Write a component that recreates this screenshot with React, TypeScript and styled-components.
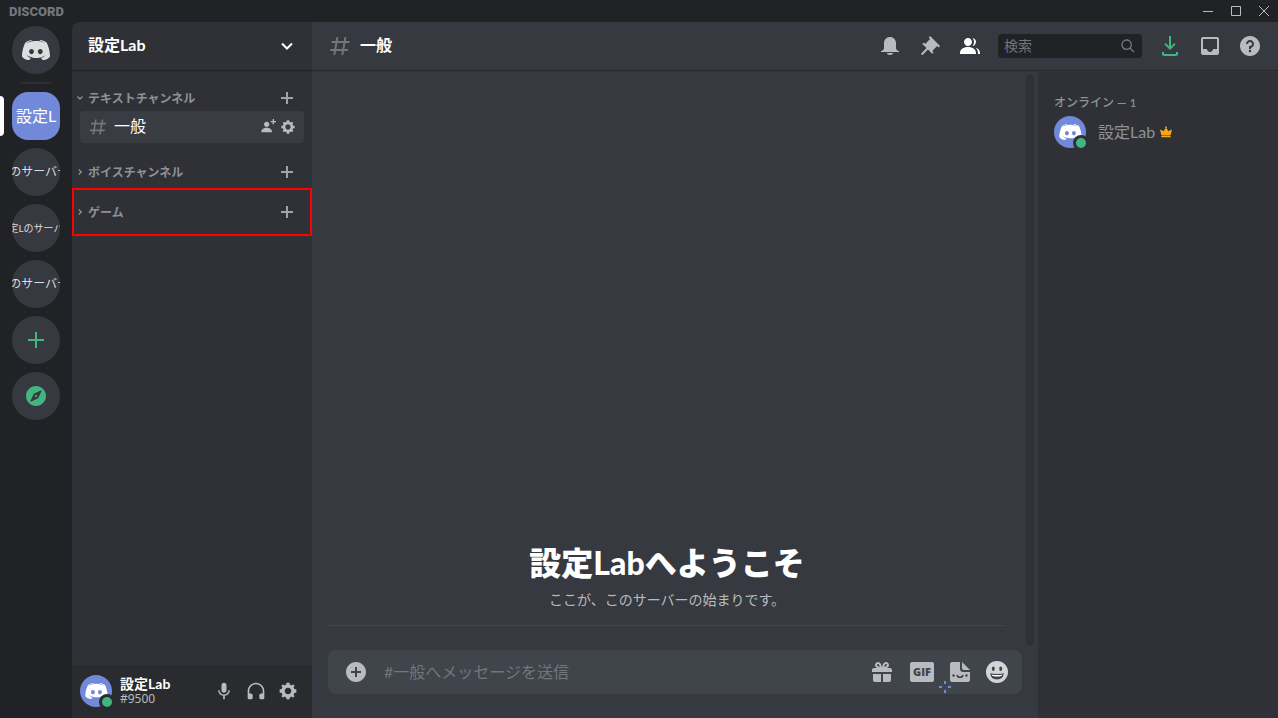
import React from 'react';
import styled, { createGlobalStyle } from 'styled-components';

const GlobalStyle = createGlobalStyle`
  *, *::before, *::after { box-sizing: border-box; }
  body {
    margin: 0;
    background: #202225;
    color: #dcddde;
    font-family: Lato, "Noto Sans CJK JP", sans-serif;
    font-size: 16px;
    line-height: 20px;
  }
  button {
    margin: 0;
    padding: 0;
    border: 0;
    background: none;
    color: inherit;
    font: inherit;
    cursor: pointer;
  }
  svg { display: block; flex: none; }
  h1, h2, h3, p, ul { margin: 0; padding: 0; font-size: inherit; }
  ul { list-style: none; }
  a { color: inherit; text-decoration: none; }
`;

const PATHS = {
  logo: 'M20.6644 20C20.6644 20 19.8014 18.9762 19.0822 18.0714C22.2226 17.1905 23.4212 15.2381 23.4212 15.2381C22.4384 15.881 21.5034 16.3334 20.6644 16.6429C19.4658 17.1429 18.3151 17.4762 17.1884 17.6667C14.887 18.0953 12.7774 17.9762 10.9795 17.6429C9.61301 17.381 8.43835 17 7.45548 16.6191C6.90411 16.4048 6.30479 16.1429 5.70548 15.8096C5.63356 15.7619 5.56164 15.7381 5.48973 15.6905C5.44178 15.6667 5.41781 15.6429 5.39384 15.6191C4.96233 15.381 4.7226 15.2143 4.7226 15.2143C4.7226 15.2143 5.87329 17.1191 8.91781 18.0238C8.19863 18.9286 7.31164 20 7.31164 20C2.0137 19.8333 0 16.381 0 16.381C0 8.7144 3.45205 2.5 3.45205 2.5C6.90411 -0.0713 10.1884 0 10.1884 0L10.4281 0.2858C6.11301 1.5239 4.12329 3.4049 4.12329 3.4049C4.12329 3.4049 4.65068 3.1192 5.53767 2.7144C8.10274 1.5954 10.1404 1.2859 10.9795 1.2144C11.1233 1.1906 11.2432 1.1668 11.387 1.1668C12.8493 0.9763 14.5034 0.9287 16.2295 1.1192C18.5068 1.3811 20.9521 2.0478 23.4452 3.4049C23.4452 3.4049 21.5514 1.6192 17.476 0.3811L17.8116 0C17.8116 0 21.0959 -0.0713 24.5479 2.5C24.5479 2.5 28 8.7144 28 16.381C28 16.381 25.9623 19.8333 20.6644 20ZM9.51712 8.8811C8.15068 8.8811 7.07192 10.0715 7.07192 11.5239C7.07192 12.9763 8.17466 14.1667 9.51712 14.1667C10.8836 14.1667 11.9623 12.9763 11.9623 11.5239C11.9863 10.0715 10.8836 8.8811 9.51712 8.8811ZM18.2671 8.8811C16.9007 8.8811 15.8219 10.0715 15.8219 11.5239C15.8219 12.9763 16.9247 14.1667 18.2671 14.1667C19.6336 14.1667 20.7123 12.9763 20.7123 11.5239C20.7123 10.0715 19.6336 8.8811 18.2671 8.8811Z',
  hash: 'M5.88657 21C5.57547 21 5.3399 20.7189 5.39427 20.4126L6 17H2.59511C2.28449 17 2.04905 16.7198 2.10259 16.4138L2.27759 15.4138C2.31946 15.1746 2.52722 15 2.77011 15H6.35L7.41 9H4.00511C3.69449 9 3.45905 8.71977 3.51259 8.41381L3.68759 7.41381C3.72946 7.17456 3.93722 7 4.18011 7H7.76L8.39677 3.41262C8.43914 3.17391 8.64664 3 8.88907 3H9.87344C10.1845 3 10.4201 3.28107 10.3657 3.58738L9.76 7H15.76L16.3968 3.41262C16.4391 3.17391 16.6466 3 16.8891 3H17.8734C18.1845 3 18.4201 3.28107 18.3657 3.58738L17.76 7H21.1649C21.4755 7 21.711 7.28023 21.6574 7.58619L21.4824 8.58619C21.4406 8.82544 21.2328 9 20.9899 9H17.41L16.35 15H19.7549C20.0655 15 20.301 15.2802 20.2474 15.5862L20.0724 16.5862C20.0306 16.8254 19.8228 17 19.5799 17H16L15.3632 20.5874C15.3209 20.8261 15.1134 21 14.8709 21H13.8866C13.5755 21 13.3399 20.7189 13.3943 20.4126L14 17H8L7.36325 20.5874C7.32088 20.8261 7.11337 21 6.87094 21H5.88657ZM9.41045 9L8.35045 15H14.3504L15.4104 9H9.41045Z',
  bell: 'M18 9V14C18 15.657 19.344 17 21 17V18H3V17C4.656 17 6 15.657 6 14V9C6 5.686 8.686 3 12 3C15.314 3 18 5.686 18 9ZM12 21C10.524 21 9.248 20.19 8.555 19H15.445C14.752 20.19 13.476 21 12 21Z',
  pin: 'M22 12L12.101 2.101L10.686 3.514L12.101 4.929L7.151 9.878V9.88L5.736 8.465L4.322 9.88L8.565 14.122L2.908 19.778L4.322 21.192L9.979 15.536L14.222 19.778L15.636 18.364L14.222 16.95L19.171 12H19.172L20.586 13.414L22 12Z',
  members: 'M14 8.006C14 10.211 12.206 12.006 10 12.006C7.795 12.006 6 10.211 6 8.006C6 5.801 7.794 4.006 10 4.006C12.206 4.006 14 5.801 14 8.006ZM2 19.006C2 15.473 5.29 13.006 10 13.006C14.711 13.006 18 15.473 18 19.006V20.006H2V19.006ZM20 20.006H22V19.006C22 16.443 20.27 14.442 17.521 13.535C19.062 14.913 20 16.806 20 19.006V20.006ZM14.883 11.908C16.666 11.504 18 9.908 18 8.006C18 5.969 16.469 4.282 14.497 4.037C15.432 5.095 16 6.485 16 8.006C16 9.449 15.489 10.774 14.638 11.81C14.72 11.842 14.802 11.874 14.883 11.908Z',
  inbox: 'M19 3H4.99C3.88 3 3.01 3.89 3.01 5L3 19C3 20.1 3.88 21 4.99 21H19C20.1 21 21 20.1 21 19V5C21 3.89 20.1 3 19 3ZM19 15H15C15 16.66 13.65 18 12 18C10.35 18 9 16.66 9 15H4.99V5H19V15Z',
  help: 'M12 2C6.486 2 2 6.487 2 12C2 17.515 6.486 22 12 22C17.514 22 22 17.515 22 12C22 6.487 17.514 2 12 2ZM12 18.25C11.31 18.25 10.75 17.691 10.75 17C10.75 16.31 11.31 15.75 12 15.75C12.69 15.75 13.25 16.31 13.25 17C13.25 17.691 12.69 18.25 12 18.25ZM13 13.875V15H11V12H12C13.104 12 14 11.103 14 10C14 8.896 13.104 8 12 8C10.896 8 10 8.896 10 10H8C8 7.795 9.795 6 12 6C14.205 6 16 7.795 16 10C16 11.861 14.723 13.429 13 13.875Z',
  search: 'M21.707 20.293L16.314 14.9C17.403 13.504 18 11.799 18 10C18 7.863 17.167 5.854 15.656 4.344C14.146 2.832 12.137 2 10 2C7.863 2 5.854 2.832 4.344 4.344C2.833 5.854 2 7.863 2 10C2 12.137 2.833 14.146 4.344 15.656C5.854 17.168 7.863 18 10 18C11.799 18 13.504 17.404 14.9 16.314L20.293 21.706L21.707 20.293ZM10 16C8.397 16 6.891 15.376 5.758 14.243C4.624 13.11 4 11.603 4 10C4 8.398 4.624 6.891 5.758 5.758C6.891 4.624 8.397 4 10 4C11.603 4 13.109 4.624 14.242 5.758C15.376 6.891 16 8.398 16 10C16 11.603 15.376 13.11 14.242 14.243C13.109 15.376 11.603 16 10 16Z',
  gear: 'M19.738 10H22V14H19.739C19.498 14.931 19.1 15.798 18.565 16.564L20 18L18 20L16.565 18.564C15.797 19.099 14.932 19.498 14 19.738V22H10V19.738C9.069 19.498 8.203 19.099 7.436 18.564L6 20L4 18L5.436 16.564C4.901 15.799 4.502 14.932 4.262 14H2V10H4.262C4.502 9.068 4.9 8.202 5.436 7.436L4 6L6 4L7.436 5.436C8.202 4.9 9.068 4.502 10 4.262V2H14V4.261C14.932 4.502 15.797 4.9 16.565 5.435L18 4L20 6L18.564 7.436C19.099 8.202 19.498 9.069 19.738 10ZM12 16C14.209 16 16 14.209 16 12C16 9.791 14.209 8 12 8C9.791 8 8 9.791 8 12C8 14.209 9.791 16 12 16Z',
  mic: 'M14.99 11C14.99 12.66 13.66 14 12 14C10.34 14 9 12.66 9 11V5C9 3.34 10.34 2 12 2C13.66 2 15 3.34 15 5L14.99 11ZM12 16.1C14.76 16.1 17.3 14 17.3 11H19C19 14.42 16.28 17.24 13 17.72V22H11V17.72C7.72 17.23 5 14.41 5 11H6.7C6.7 14 9.24 16.1 12 16.1Z',
  headphones: 'M12 2C6.486 2 2 6.488 2 12V20C2 21.107 2.895 22 4 22H6C7.104 22 8 21.107 8 20V17C8 15.899 7.104 15 6 15H4V12C4 7.591 7.589 4 12 4C16.411 4 20 7.591 20 12V15H18C16.896 15 16 15.899 16 17V20C16 21.107 16.896 22 18 22H20C21.104 22 22 21.107 22 20V12C22 6.488 17.514 2 12 2Z',
  invite: 'M21 3H24V5H21V8H19V5H16V3H19V0H21V3ZM10 12C12.205 12 14 10.205 14 8C14 5.795 12.205 4 10 4C7.795 4 6 5.795 6 8C6 10.205 7.795 12 10 12ZM10 13C5.289 13 2 15.467 2 19V20H18V19C18 15.467 14.711 13 10 13Z',
  attach: 'M12 2C6.486 2 2 6.487 2 12C2 17.515 6.486 22 12 22C17.514 22 22 17.515 22 12C22 6.487 17.514 2 12 2ZM17 13H13V17H11V13H7V11H11V7H13V11H17V13Z',
  compass: 'M12 10.9c-.61 0-1.1.49-1.1 1.1s.49 1.1 1.1 1.1c.61 0 1.1-.49 1.1-1.1s-.49-1.1-1.1-1.1zM12 2C6.48 2 2 6.48 2 12s4.48 10 10 10 10-4.48 10-10S17.52 2 12 2zm2.19 12.19L6 18l3.81-8.19L18 6l-3.81 8.19z',
  plus: 'M11 4H13V11H20V13H13V20H11V13H4V11H11Z',
  plusBold: 'M10.667 4H13.333V10.667H20V13.333H13.333V20H10.667V13.333H4V10.667H10.667Z',
  download: 'M11 2H13V12.2L16.3 8.9L17.7 10.3L12 16L6.3 10.3L7.7 8.9L11 12.2ZM4 18H6V20H18V18H20V20C20 21.1 19.1 22 18 22H6C4.9 22 4 21.1 4 20Z',
  gift: 'M16.886 8H20C21.104 8 22 8.896 22 10V12H2V10C2 8.896 2.897 8 4 8H7.114C6.663 7.764 6.236 7.477 5.879 7.121C4.709 5.951 4.709 4.048 5.879 2.879C7.012 1.746 8.986 1.745 10.121 2.877C11.758 4.514 11.979 7.595 11.998 7.941L12 8L12.002 7.941C12.022 7.595 12.242 4.514 13.879 2.877C15.014 1.745 16.986 1.746 18.121 2.877C19.29 4.048 19.29 5.951 18.121 7.121C17.764 7.477 17.337 7.764 16.886 8ZM7.293 5.707C6.903 5.316 6.903 4.682 7.293 4.292C7.481 4.103 7.732 4 8 4C8.268 4 8.519 4.103 8.707 4.292C9.297 4.882 9.641 5.94 9.825 6.822C8.945 6.639 7.879 6.293 7.293 5.707ZM14.174 6.824C14.359 5.941 14.702 4.883 15.293 4.293C15.481 4.103 15.732 4 16 4C16.268 4 16.519 4.103 16.706 4.291C17.096 4.682 17.097 5.316 16.707 5.707C16.116 6.298 15.057 6.642 14.174 6.824ZM3 14H11V22H5C3.896 22 3 21.102 3 20V14ZM13 14H21V20C21 21.102 20.104 22 19 22H13V14Z',
};

type IconName = keyof typeof PATHS;

const Icon = ({ name, size = 24 }: { name: IconName; size?: number }) => (
  <svg width={size} height={size} viewBox="0 0 24 24" fill="currentColor" fillRule="evenodd" aria-hidden="true">
    <path d={PATHS[name]} />
  </svg>
);

const Logo = ({ width, height }: { width: number; height: number }) => (
  <svg width={width} height={height} viewBox="0 0 28 20" fill="currentColor" aria-hidden="true">
    <path d={PATHS.logo} />
  </svg>
);

const Window = styled.div`
  display: flex;
  flex-direction: column;
  min-height: 100vh;
`;

const TitleBar = styled.header`
  display: flex;
  align-items: center;
  justify-content: space-between;
  height: 22px;
  padding-left: 9px;
`;

const Wordmark = styled.span`
  padding-top: 2px;
  color: #72767d;
  font: 900 13px/22px Roboto, sans-serif;
`;

const WindowControls = styled.div`
  display: flex;
`;

const WindowButton = styled.button`
  display: grid;
  place-items: center;
  width: 28px;
  height: 22px;
  color: #b9bbbe;
`;

const Body = styled.div`
  display: flex;
  flex: 1;
`;

const Rail = styled.nav`
  flex: none;
  display: flex;
  flex-direction: column;
  align-items: center;
  gap: 8px;
  width: 72px;
  padding-top: 4px;
`;

const RailSlot = styled.div`
  position: relative;
  display: flex;
  justify-content: center;
  width: 100%;
`;

const ActivePill = styled.span`
  position: absolute;
  left: 0;
  top: 4px;
  width: 4px;
  height: 40px;
  border-radius: 0 4px 4px 0;
  background: #fff;
`;

const ServerButton = styled.button<{ $active?: boolean; $green?: boolean; $size?: number }>`
  display: flex;
  align-items: center;
  justify-content: center;
  width: 48px;
  height: 48px;
  overflow: hidden;
  border-radius: ${(p) => (p.$active ? 16 : 24)}px;
  background: ${(p) => (p.$active ? '#7289da' : '#36393f')};
  color: ${(p) => (p.$active ? '#fff' : p.$green ? '#43b581' : '#dcddde')};
  font-size: ${(p) => p.$size ?? 16}px;
  white-space: nowrap;
`;

const RailDivider = styled.hr`
  width: 32px;
  height: 2px;
  margin: 0;
  border: 0;
  border-radius: 1px;
  background: #2d2f34;
`;

const Sidebar = styled.aside`
  flex: none;
  display: flex;
  flex-direction: column;
  width: 240px;
  overflow: hidden;
  border-radius: 8px 0 0 0;
  background: #2f3136;
`;

const Label = styled.span`
  padding-bottom: 2px;
`;

const ServerHeader = styled.button`
  display: flex;
  align-items: center;
  justify-content: space-between;
  height: 48px;
  padding: 0 16px;
  color: #fff;
  font-weight: 700;
  box-shadow: 0 1px 0 #202225, 0 2px 0 #2b2d32;
`;

const ChannelList = styled.div`
  flex: 1;
  display: flex;
  flex-direction: column;
`;

const CategoryHeader = styled.div`
  position: relative;
  display: flex;
  align-items: center;
  height: 24px;
  margin-top: 16px;
  padding: 0 16px 0 4px;
  color: #8e9297;
`;

const CategoryToggle = styled.button`
  flex: 1;
  display: flex;
  align-items: center;
  gap: 4px;
  font-size: 12px;
  font-weight: 700;
  line-height: 22px;
  text-align: left;
`;

const CategoryName = styled.span`
  padding-top: 2px;
`;

const Highlight = styled.span`
  position: absolute;
  inset: -12px 0;
  border: 2px solid #f00;
  pointer-events: none;
`;

const IconButton = styled.button<{ $color?: string }>`
  flex: none;
  display: grid;
  place-items: center;
  color: ${(p) => p.$color ?? '#b9bbbe'};
`;

const ChannelRow = styled.div`
  display: flex;
  align-items: center;
  gap: 4px;
  height: 32px;
  margin: 1px 8px;
  padding: 0 8px;
  border-radius: 4px;
  background: #393c43;
`;

const ChannelLink = styled.a`
  flex: 1;
  display: flex;
  align-items: center;
  gap: 6px;
  color: #fff;

  svg { color: #72767d; }
`;

const UserPanel = styled.section`
  display: flex;
  align-items: center;
  height: 53px;
  padding: 0 8px 1px;
  background: #292b2f;
`;

const Avatar = styled.span`
  position: relative;
  flex: none;
  display: grid;
  place-items: center;
  width: 32px;
  height: 32px;
  border-radius: 50%;
  background: #7289da;
  color: #fff;
`;

const StatusDot = styled.span<{ $ring: string }>`
  position: absolute;
  right: -3px;
  bottom: -3px;
  width: 16px;
  height: 16px;
  border: 3px solid ${(p) => p.$ring};
  border-radius: 50%;
  background: #43b581;
`;

const UserText = styled.div`
  flex: 1;
  margin-left: 8px;
`;

const UserName = styled.div`
  color: #fff;
  font-size: 14px;
  font-weight: 700;
  line-height: 16px;
`;

const UserTag = styled.div`
  color: #b9bbbe;
  font-size: 12px;
  font-family: "Noto Sans", sans-serif;
  line-height: 14px;
`;

const PanelButton = styled(IconButton)`
  width: 32px;
  height: 32px;
`;

const Content = styled.div`
  flex: 1;
  min-width: 0;
  display: flex;
  flex-direction: column;
  background: #36393f;
`;

const Toolbar = styled.div`
  position: relative;
  display: flex;
  align-items: center;
  gap: 16px;
  height: 48px;
  padding: 0 16px;
  box-shadow: 0 1px 0 #292b2f, 0 2px 0 #313439;
`;

const ChannelTitle = styled.h1`
  flex: 1;
  display: flex;
  align-items: center;
  gap: 8px;
  color: #fff;
  font-size: 16px;
  font-weight: 700;

  svg { color: #72767d; }
`;

const SearchBox = styled.label`
  display: flex;
  align-items: center;
  width: 144px;
  height: 24px;
  padding: 0 6px;
  border-radius: 4px;
  background: #202225;
  color: #72767d;
`;

const TextInput = styled.input<{ $size: number }>`
  flex: 1;
  min-width: 0;
  padding: 0 0 2px;
  border: 0;
  outline: 0;
  background: none;
  color: #dcddde;
  font-family: inherit;
  font-size: ${(p) => p.$size}px;

  &::placeholder { color: #72767d; opacity: 1; }
`;

const Columns = styled.div`
  flex: 1;
  display: flex;
`;

const Chat = styled.main`
  flex: 1;
  min-width: 0;
  display: flex;
  flex-direction: column;
`;

const Messages = styled.div`
  flex: 1;
  display: flex;
  padding: 4px 4px 4px 16px;
`;

const MessageFlow = styled.div`
  flex: 1;
  display: flex;
  flex-direction: column;
  justify-content: flex-end;
  padding: 0 20px 20px 0;
`;

const ScrollTrack = styled.div`
  width: 8px;
  border-radius: 4px;
  background: #2e3338;
`;

const Welcome = styled.section`
  padding-bottom: 15px;
  border-bottom: 1px solid #42454a;
  text-align: center;
`;

const WelcomeTitle = styled.h2`
  margin-bottom: 7px;
  color: #fff;
  font-size: 32px;
  font-weight: 900;
  line-height: 40px;
`;

const WelcomeText = styled.p`
  color: #b9bbbe;
  font-size: 14px;
  line-height: 20px;
`;

const Composer = styled.form`
  position: relative;
  display: flex;
  align-items: center;
  gap: 16px;
  height: 44px;
  margin: 0 16px 24px;
  padding: 0 14px 0 16px;
  border-radius: 8px;
  background: #40444b;
`;

const GifLabel = styled.span`
  width: 24px;
  height: 20px;
  border-radius: 2px;
  background: #b9bbbe;
  color: #40444b;
  font: 800 11px/20px "Open Sans", sans-serif;
  text-align: center;
`;

const Sparkle = styled.svg`
  position: absolute;
  right: 71px;
  bottom: 1px;
`;

const Members = styled.aside`
  flex: none;
  width: 240px;
  padding: 22px 16px;
  background: #2f3136;
`;

const MembersTitle = styled.h3`
  margin-bottom: 2px;
  color: #8e9297;
  font-size: 12px;
  font-weight: 500;
  line-height: 22px;
`;

const MemberRow = styled.li`
  display: flex;
  align-items: center;
  height: 32px;
  color: #8e9297;
`;

const MemberName = styled.span`
  margin: 0 4px 0 12px;
`;

const Caret = ({ open }: { open?: boolean }) => (
  <svg width="8" height="8" viewBox="0 0 8 8" fill="none" stroke="currentColor" strokeWidth="1.3" aria-hidden="true">
    <path d={open ? 'M1.5 2.5L4 5L6.5 2.5' : 'M2.8 1.5L5.3 4L2.8 6.5'} />
  </svg>
);

const Category = ({ name, open, highlighted }: { name: string; open?: boolean; highlighted?: boolean }) => (
  <CategoryHeader>
    <CategoryToggle type="button" aria-expanded={!!open}>
      <Caret open={open} />
      <CategoryName>{name}</CategoryName>
    </CategoryToggle>
    <IconButton type="button" aria-label="チャンネルを作成" $color="#a0a3a8">
      <Icon name="plusBold" size={18} />
    </IconButton>
    {highlighted && <Highlight />}
  </CategoryHeader>
);

const UserAvatar = ({ ring }: { ring: string }) => (
  <Avatar>
    <Logo width={23} height={16} />
    <StatusDot $ring={ring} />
  </Avatar>
);

const servers = [
  { label: '設定L', size: 16, active: true },
  { label: 'Lのサーバー', size: 12 },
  { label: '設定Lのサーバー', size: 10 },
  { label: 'Lのサーバー', size: 12 },
];

export default function App() {
  return (
    <Window>
      <GlobalStyle />
      <TitleBar>
        <Wordmark>DISCORD</Wordmark>
        <WindowControls>
          <WindowButton type="button" aria-label="最小化">
            <svg width="10" height="10" viewBox="0 0 10 10" fill="currentColor"><path d="M0 5H10V6H0Z" /></svg>
          </WindowButton>
          <WindowButton type="button" aria-label="最大化">
            <svg width="10" height="10" viewBox="0 0 10 10" fill="none" stroke="currentColor"><path d="M.5.5H9.5V9.5H.5Z" /></svg>
          </WindowButton>
          <WindowButton type="button" aria-label="閉じる">
            <svg width="10" height="10" viewBox="0 0 10 10" fill="none" stroke="currentColor"><path d="M0 0L10 10M10 0L0 10" /></svg>
          </WindowButton>
        </WindowControls>
      </TitleBar>
      <Body>
        <Rail aria-label="サーバー">
          <ServerButton type="button" aria-label="ホーム">
            <Logo width={28} height={20} />
          </ServerButton>
          <RailDivider />
          {servers.map((s, i) => (
            <RailSlot key={i}>
              {s.active && <ActivePill />}
              <ServerButton type="button" $active={s.active} $size={s.size}>{s.label}</ServerButton>
            </RailSlot>
          ))}
          <ServerButton type="button" $green aria-label="サーバーを追加">
            <Icon name="plus" />
          </ServerButton>
          <ServerButton type="button" $green aria-label="サーバーを探す">
            <Icon name="compass" />
          </ServerButton>
        </Rail>

        <Sidebar>
          <ServerHeader type="button">
            <Label>設定Lab</Label>
            <svg width="18" height="18" viewBox="0 0 18 18" fill="none" stroke="currentColor" strokeWidth="2" aria-hidden="true">
              <path d="M4 6.5L9 11.5L14 6.5" />
            </svg>
          </ServerHeader>
          <ChannelList>
            <Category name="テキストチャンネル" open />
            <ChannelRow>
              <ChannelLink href="#general">
                <Icon name="hash" size={20} />
                <Label>一般</Label>
              </ChannelLink>
              <IconButton type="button" aria-label="招待を作成"><Icon name="invite" size={16} /></IconButton>
              <IconButton type="button" aria-label="チャンネルの編集"><Icon name="gear" size={16} /></IconButton>
            </ChannelRow>
            <Category name="ボイスチャンネル" />
            <Category name="ゲーム" highlighted />
          </ChannelList>
          <UserPanel>
            <UserAvatar ring="#292b2f" />
            <UserText>
              <UserName>設定Lab</UserName>
              <UserTag>#9500</UserTag>
            </UserText>
            <PanelButton type="button" aria-label="ミュート"><Icon name="mic" size={20} /></PanelButton>
            <PanelButton type="button" aria-label="スピーカーミュート"><Icon name="headphones" size={20} /></PanelButton>
            <PanelButton type="button" aria-label="ユーザー設定"><Icon name="gear" size={20} /></PanelButton>
          </UserPanel>
        </Sidebar>

        <Content>
          <Toolbar>
            <ChannelTitle>
              <Icon name="hash" />
              <Label>一般</Label>
            </ChannelTitle>
            <IconButton type="button" aria-label="通知設定"><Icon name="bell" /></IconButton>
            <IconButton type="button" aria-label="ピン留め"><Icon name="pin" /></IconButton>
            <IconButton type="button" aria-label="メンバーリスト" $color="#fff"><Icon name="members" /></IconButton>
            <SearchBox>
              <TextInput $size={14} type="text" placeholder="検索" aria-label="検索" />
              <Icon name="search" size={16} />
            </SearchBox>
            <IconButton type="button" aria-label="アップデート" $color="#43b581"><Icon name="download" /></IconButton>
            <IconButton type="button" aria-label="受信ボックス"><Icon name="inbox" /></IconButton>
            <IconButton type="button" aria-label="ヘルプ"><Icon name="help" /></IconButton>
          </Toolbar>
          <Columns>
            <Chat>
              <Messages>
                <MessageFlow>
                  <Welcome>
                    <WelcomeTitle>設定Labへようこそ</WelcomeTitle>
                    <WelcomeText>ここが、このサーバーの始まりです。</WelcomeText>
                  </Welcome>
                </MessageFlow>
                <ScrollTrack />
              </Messages>
              <Composer>
                <IconButton type="button" aria-label="ファイルを添付"><Icon name="attach" /></IconButton>
                <TextInput $size={16} type="text" placeholder="#一般へメッセージを送信" aria-label="メッセージ" />
                <IconButton type="button" aria-label="ギフト"><Icon name="gift" /></IconButton>
                <IconButton type="button"><GifLabel>GIF</GifLabel></IconButton>
                <IconButton type="button" aria-label="スタンプ">
                  <svg width="20" height="20" viewBox="0 0 20 20" fill="currentColor">
                    <path d="M2 0H10V7C10 8.7 11.3 10 13 10H20V18Q20 20 18 20H2Q0 20 0 18V2Q0 0 2 0Z" />
                    <path d="M12 0L20 8H14Q12 8 12 6Z" />
                    <g fill="#40444b">
                      <circle cx="3.5" cy="13.5" r="1.2" />
                      <circle cx="16.5" cy="13.5" r="1.2" />
                    </g>
                    <path d="M7 13Q7.4 15.3 10 15.3Q12.6 15.3 13 13" fill="none" stroke="#40444b" strokeWidth="1.5" />
                  </svg>
                </IconButton>
                <IconButton type="button" aria-label="絵文字" $color="#d4d5d6">
                  <svg width="22" height="22" viewBox="0 0 22 22" fill="currentColor">
                    <circle cx="11" cy="11" r="11" />
                    <g fill="#40444b">
                      <ellipse cx="7.3" cy="7.8" rx="1.5" ry="2.3" />
                      <ellipse cx="14.7" cy="7.8" rx="1.5" ry="2.3" />
                      <path d="M4.2 12.2Q11 13.8 17.8 12.2Q17.3 18.4 11 18.4Q4.7 18.4 4.2 12.2Z" />
                    </g>
                    <path d="M5.5 13.5Q11 14.7 16.5 13.5Q16 15.6 11 15.6Q6 15.6 5.5 13.5Z" fill="#fff" />
                  </svg>
                </IconButton>
                <Sparkle width="12" height="12" viewBox="0 0 12 12" fill="#7289da" aria-hidden="true">
                  <path d="M5 0H7V3H5ZM5 9H7V12H5ZM0 5H3V7H0ZM9 5H12V7H9Z" />
                </Sparkle>
              </Composer>
            </Chat>
            <Members>
              <MembersTitle>オンライン — 1</MembersTitle>
              <ul>
                <MemberRow>
                  <UserAvatar ring="#2f3136" />
                  <MemberName>設定Lab</MemberName>
                  <svg width="14" height="14" viewBox="0 0 16 16" fill="#faa61a" role="img" aria-label="サーバー所有者">
                    <path d="M13.657 5.429C13.888 5.29 14.181 5.304 14.397 5.465C14.613 5.626 14.712 5.901 14.647 6.162L13.314 11.495C13.239 11.793 12.973 12 12.667 12H3.333C3.027 12 2.761 11.792 2.686 11.495L1.353 6.162C1.288 5.901 1.387 5.626 1.603 5.465C1.82 5.305 2.112 5.291 2.343 5.429L5.132 7.102L7.446 3.631L7.545 3.545L6.903 2.903C6.773 2.773 6.773 2.561 6.903 2.431L7.765 1.569C7.894 1.44 8.107 1.44 8.236 1.569L9.098 2.431C9.227 2.561 9.227 2.773 9.098 2.903L8.456 3.545L8.555 3.631L10.869 7.102L13.657 5.429ZM2.667 12.667H13.333V14H2.667V12.667Z" />
                  </svg>
                </MemberRow>
              </ul>
            </Members>
          </Columns>
        </Content>
      </Body>
    </Window>
  );
}
